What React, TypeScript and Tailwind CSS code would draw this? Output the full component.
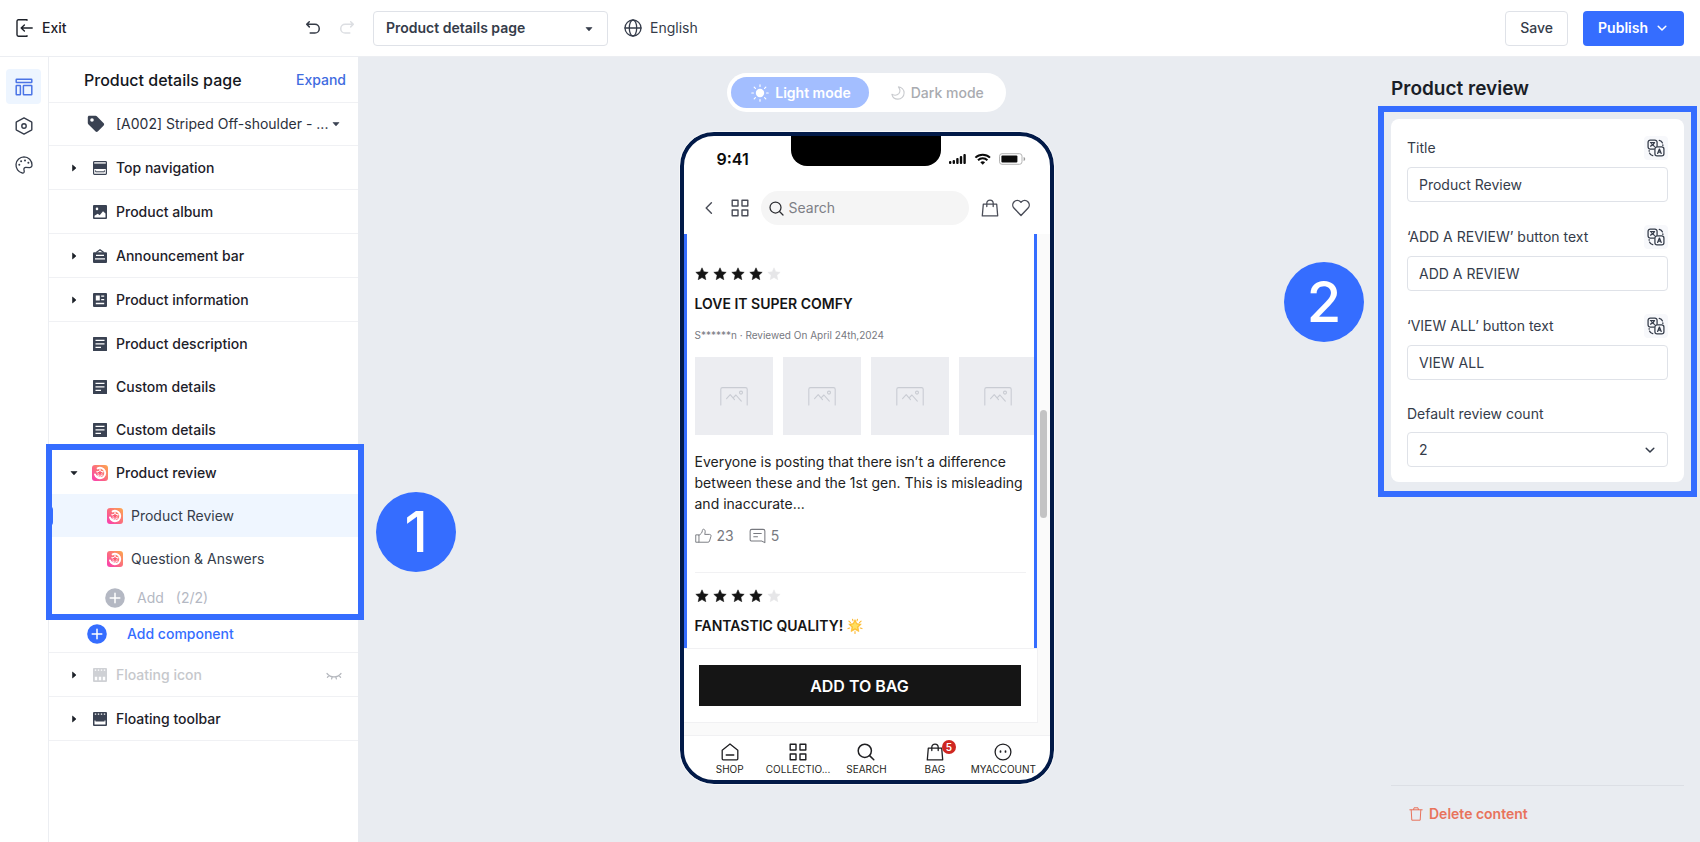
import type { ReactNode } from "react";

type IconProps = { className?: string };

const stroke = {
  fill: "none",
  stroke: "currentColor",
  strokeLinecap: "round" as const,
  strokeLinejoin: "round" as const,
};

function Caret({ className = "" }: IconProps) {
  return (
    <svg className={`h-2 w-2 ${className}`} viewBox="0 0 8 8" aria-hidden="true">
      <path d="M1 2.5h6L4.4 5.6a.6.6 0 0 1-.8 0z" fill="currentColor" stroke="currentColor" strokeWidth=".6" strokeLinejoin="round" />
    </svg>
  );
}

function ChevronDown({ className = "" }: IconProps) {
  return (
    <svg className={`h-3 w-3 ${className}`} viewBox="0 0 12 12" {...stroke} strokeWidth="1.5" aria-hidden="true">
      <path d="M2.2 4.2 6 8l3.8-3.8" />
    </svg>
  );
}

function BackIcon() {
  return (
    <svg className="h-3 w-3" viewBox="0 0 12 12" {...stroke} strokeWidth="1.4" aria-hidden="true">
      <path d="M8.400.8 3.200 6l5.200 5.200" />
    </svg>
  );
}

function ExitIcon() {
  return (
    <svg className="h-[18px] w-[18px]" viewBox="0 0 18 18" {...stroke} strokeWidth="1.4" aria-hidden="true">
      <path d="M11 1.200V.8H2.400C1.600.8 1 1.400 1 2.200v13.600c0 .8.600 1.400 1.400 1.400H11v-.4M16.200 9H5.200M8.400 6 5.200 9l3.200 3" />
    </svg>
  );
}

function UndoIcon({ className = "" }: IconProps) {
  return (
    <svg className={`h-4 w-4 ${className}`} viewBox="0 0 16 16" {...stroke} strokeWidth="1.5" aria-hidden="true">
      <path d="M4.300 1.800 1.700 4.300l2.600 2.600M1.900 4.300h8a4.200 4.200 0 0 1 0 8.700H5.200" />
    </svg>
  );
}

function GlobeIcon() {
  return (
    <svg className="h-[18px] w-[18px]" viewBox="0 0 18 18" {...stroke} strokeWidth="1.3" aria-hidden="true">
      <circle cx="9" cy="9" r="8" />
      <ellipse cx="9" cy="9" rx="3.7" ry="8" />
      <path d="M1 9h16" />
    </svg>
  );
}

function LayoutIcon() {
  return (
    <svg className="h-[18px] w-[18px]" viewBox="0 0 18 18" {...stroke} strokeWidth="1.5" aria-hidden="true">
      <rect x="1.2" y="1.2" width="15.6" height="3.4" rx=".5" />
      <rect x="1.2" y="7.6" width="4.2" height="9.2" rx=".5" />
      <rect x="8.4" y="7.6" width="8.4" height="9.2" rx=".5" />
    </svg>
  );
}

function HexIcon() {
  return (
    <svg className="h-[18px] w-[18px]" viewBox="0 0 18 18" {...stroke} strokeWidth="1.4" aria-hidden="true">
      <path d="M9 .9 16.400 4.800c.3.200.4.400.4.700v7c0 .3-.1.500-.4.700L9 17.100l-7.400-3.900c-.3-.2-.4-.4-.4-.7v-7c0-.3.1-.5.4-.7z" />
      <circle cx="9" cy="9" r="2.2" />
    </svg>
  );
}

function PaletteIcon() {
  return (
    <svg className="h-[18px] w-[18px]" viewBox="0 0 18 18" {...stroke} strokeWidth="1.3" aria-hidden="true">
      <path d="M9 .8a8.200 8.200 0 0 0-1.600 16.200c1.300.2 2-.6 1.800-1.800l-.3-1.700c-.2-1.300.7-2.200 2-2.100l3.400.3c1.400.1 2.700-.9 2.700-2.700C17 4.500 13.500.8 9 .8z" />
      <g fill="currentColor" stroke="none">
        <circle cx="4.3" cy="8.8" r="1" />
        <circle cx="6.1" cy="5.2" r="1" />
        <circle cx="10" cy="4.4" r="1" />
        <circle cx="13.4" cy="6.8" r="1" />
      </g>
    </svg>
  );
}

function TagIcon() {
  return (
    <svg className="h-[18px] w-[18px] shrink-0" viewBox="0 0 18 18" aria-hidden="true">
      <path
        fillRule="evenodd"
        fill="currentColor"
        d="M2.200.8h6.500c.4 0 .8.2 1.100.5l6.900 7c.6.600.6 1.500 0 2.100l-6 6.200c-.6.600-1.500.6-2.100 0L1.300 9.200c-.3-.3-.5-.7-.5-1.100V2.300C.8 1.500 1.400.8 2.200.8zM5 3.200a1.800 1.800 0 1 0 0 3.600 1.800 1.800 0 0 0 0-3.600z"
      />
    </svg>
  );
}

function Glyph({ children }: { children: ReactNode }) {
  return (
    <svg className="h-[14px] w-[14px]" viewBox="0 0 14 14" fill="currentColor" aria-hidden="true">
      {children}
    </svg>
  );
}

const topNavGlyph = (
  <Glyph>
    <rect x=".6" y=".6" width="12.8" height="12.8" rx=".8" fill="none" stroke="currentColor" strokeWidth="1.2" />
    <path d="M1 2.600h12V8H1z" />
    <path d="M2.600 9.400v1.400h8.800V9.400" fill="none" stroke="currentColor" strokeWidth="1" />
  </Glyph>
);

const albumGlyph = (
  <Glyph>
    <path fillRule="evenodd" d="M1 0h12a1 1 0 0 1 1 1v12a1 1 0 0 1-1 1H1a1 1 0 0 1-1-1V1a1 1 0 0 1 1-1zm3 2.600a1.300 1.300 0 1 0 0 2.600 1.300 1.300 0 0 0 0-2.600zM1.500 12.500h11V8.600L10 6.200l-3.300 4.100-2-1.600-3.200 2z" />
  </Glyph>
);

const announceGlyph = (
  <Glyph>
    <path d="M3.200 3.600 7 .8l3.800 2.800" fill="none" stroke="currentColor" strokeWidth="1.3" />
    <path fillRule="evenodd" d="M1 3.200h12a1 1 0 0 1 1 1V13a1 1 0 0 1-1 1H1a1 1 0 0 1-1-1V4.200a1 1 0 0 1 1-1zm2 2.500v1.300h8V5.700zm-1 3.500v1.300h10V9.200z" />
  </Glyph>
);

const infoGlyph = (
  <Glyph>
    <path fillRule="evenodd" d="M1 0h12a1 1 0 0 1 1 1v12a1 1 0 0 1-1 1H1a1 1 0 0 1-1-1V1a1 1 0 0 1 1-1zm1.800 2.500v5h4v-5zm5.400 0v1.300h3V2.500zm0 3.400v1.300h3V5.900zM2.800 9.800v1.400h8.400V9.800z" />
  </Glyph>
);

const textGlyph = (
  <Glyph>
    <path fillRule="evenodd" d="M.6 0h12.800c.3 0 .6.3.6.600v12.800c0 .3-.3.600-.6.600H.6a.6.6 0 0 1-.6-.6V.6C0 .3.3 0 .6 0zM2.500 2.800v1.300h9V2.800zm0 3.500v1.300h9V6.300zm0 3.500v1.300h5.500V9.800z" />
  </Glyph>
);

const toolbarGlyph = (
  <Glyph>
    <path fillRule="evenodd" d="M1 0h12a1 1 0 0 1 1 1v12a1 1 0 0 1-1 1H1a1 1 0 0 1-1-1V1a1 1 0 0 1 1-1zm.8 1.500v1.200h1.400V1.500zm3 0v1.200h1.400V1.500zm3 0v1.200h1.400V1.500zm3 0v1.200h1.400V1.500zM1.500 8.600v3.900h11V8.600h-1v1h-9v-1z" />
  </Glyph>
);

const floatingGlyph = (
  <Glyph>
    <path fillRule="evenodd" d="M1 0h12a1 1 0 0 1 1 1v12a1 1 0 0 1-1 1H1a1 1 0 0 1-1-1V1a1 1 0 0 1 1-1zm.8 1.500v1.200h1.400V1.500zm3 0v1.200h1.400V1.500zm3 0v1.200h1.400V1.500zm3 0v1.200h1.400V1.500zM1.800 8.800v3.400h2.400V8.800zm4 0v3.400h2.400V8.800zm4 0v3.400h2.400V8.800z" />
  </Glyph>
);

function ReviewAppIcon() {
  return (
    <svg className="h-4 w-4" viewBox="0 0 16 16" aria-hidden="true">
      <defs>
        <linearGradient id="reviewApp" x1="0" y1="1" x2="1" y2="0">
          <stop offset="0" stopColor="#f93bb4" />
          <stop offset=".5" stopColor="#fb6f7c" />
          <stop offset="1" stopColor="#fda94c" />
        </linearGradient>
      </defs>
      <rect width="16" height="16" rx="3" fill="url(#reviewApp)" />
      <path d="M5.600 3.400A5.200 5.200 0 1 1 3 9.400" fill="none" stroke="#fff" strokeWidth="1.900" strokeLinecap="round" />
      <path d="M2.600 8.600c1.600 2.600 4.200 3.200 6.600 2.700l.6 1.900C6.400 14.600 2.800 12.400 2.600 8.600z" fill="#fff" />
      <path d="m8 4.400 1 2.200 2.400.2-1.800 1.600.5 2.400L8 9.600l-2.100 1.200.5-2.400-1.800-1.600L7 6.600z" fill="#fff" stroke="#fff" strokeWidth="1" />
      <path d="m8 5 .9 1.900 2.100.2-1.600 1.400.4 2L8 9.500l-1.800 1 .4-2L5 7.100l2.100-.2z" fill="#fb5c74" />
    </svg>
  );
}

function PlusCircle() {
  return (
    <svg className="h-5 w-5" viewBox="0 0 20 20" aria-hidden="true">
      <circle cx="10" cy="10" r="9.8" fill="currentColor" />
      <path d="M10 5.200v9.600M5.200 10h9.600" stroke="#fff" strokeWidth="1.5" strokeLinecap="round" />
    </svg>
  );
}

function ClosedEye() {
  return (
    <svg className="h-4 w-4 text-[#b4b7bd]" viewBox="0 0 16 16" {...stroke} strokeWidth="1.2" aria-hidden="true">
      <path d="M1 6.500c1.800 2.200 4.200 3.400 7 3.400s5.200-1.200 7-3.400M3 8.500 1.400 10.400M6.200 9.800l-.6 2.200M9.800 9.800l.6 2.200M13 8.500l1.600 1.900" />
    </svg>
  );
}

function SunIcon() {
  return (
    <svg className="h-[18px] w-[18px]" viewBox="0 0 18 18" fill="currentColor" aria-hidden="true">
      <circle cx="9" cy="9" r="4.2" />
      <path
        d="M9 .8v1.600M9 15.600v1.600M.8 9h1.600M15.600 9h1.600M3.200 3.200l1.200 1.200M13.600 13.600l1.200 1.200M3.200 14.800l1.200-1.200M13.600 4.400l1.200-1.200"
        stroke="currentColor"
        strokeWidth="1.2"
        strokeLinecap="round"
      />
    </svg>
  );
}

function MoonIcon() {
  return (
    <svg className="h-[14px] w-[14px] text-[#c9cbcf]" viewBox="0 0 14 14" {...stroke} strokeWidth="1.1" aria-hidden="true">
      <path d="M7.400.9c2 2.700 1.900 5 .4 6.700-1.700 1.800-4.300 2-6.900.7.6 2.800 3 4.800 6 4.800 3.400 0 6.200-2.700 6.200-6.100 0-3-2.300-5.700-5.700-6.100z" />
    </svg>
  );
}

function GridIcon() {
  return (
    <svg className="h-[18px] w-[18px]" viewBox="0 0 18 18" {...stroke} strokeWidth="1.4" aria-hidden="true">
      <rect x="1.2" y="1.2" width="5.8" height="5.8" />
      <rect x="11" y="1.2" width="5.8" height="5.8" />
      <rect x="1.2" y="11" width="5.8" height="5.8" />
      <rect x="11" y="11" width="5.8" height="5.8" />
    </svg>
  );
}

function SearchIcon({ className = "" }: IconProps) {
  return (
    <svg className={className} viewBox="0 0 18 18" {...stroke} strokeWidth="1.5" aria-hidden="true">
      <circle cx="7.8" cy="7.8" r="6.6" />
      <path d="m12.600 12.600 4.200 4.200" />
    </svg>
  );
}

function BagIcon() {
  return (
    <svg className="h-[18px] w-[18px]" viewBox="0 0 18 18" {...stroke} strokeWidth="1.3" aria-hidden="true">
      <path d="M2.300 5.200h13.400l1 11.700H1.300zM5.800 7.600V4.300a3.200 3.200 0 0 1 6.400 0v3.300" />
    </svg>
  );
}

function HeartIcon() {
  return (
    <svg className="h-[18px] w-[18px]" viewBox="0 0 18 18" {...stroke} strokeWidth="1.4" aria-hidden="true">
      <path d="M9 16.400 2.100 9.200a4.600 4.600 0 0 1 0-6.500 4.500 4.500 0 0 1 6.400 0L9 3.300l.5-.6a4.500 4.500 0 0 1 6.400 0 4.600 4.600 0 0 1 0 6.500z" />
    </svg>
  );
}

function StarIcon({ filled }: { filled: boolean }) {
  return (
    <svg className={`h-[14px] w-[14px] ${filled ? "text-[#151515]" : "text-[#e6e6e8]"}`} viewBox="0 0 14 14" aria-hidden="true">
      <path
        d="m7 .8 1.800 4 4.400.5-3.300 3 .9 4.400L7 10.500l-3.800 2.200.9-4.400-3.300-3 4.400-.5z"
        fill="currentColor"
        stroke="currentColor"
        strokeWidth=".5"
        strokeLinejoin="round"
      />
    </svg>
  );
}

function GlowStar() {
  return (
    <svg className="h-4 w-4" viewBox="0 0 16 16" role="img" aria-label="glowing star">
      <g stroke="#fbb934" strokeWidth="1.100" strokeLinecap="round">
        <path d="M5.500 1.200 6 2.800M10.500 1.200 10 2.800M1.900 3.200l1.600 1.400M14.100 3.200l-1.600 1.400M1 10.600l1.800-.6M15 10.600l-1.800-.6M8 13.600v2" />
      </g>
      <path d="M8 1.600 9.900 5.600l4.400.6-3.200 3 .8 4.400L8 11.500l-3.900 2.100.8-4.400-3.200-3 4.400-.6z" fill="#fdbb2a" stroke="#fdbb2a" strokeWidth=".6" strokeLinejoin="round" />
      <path d="M8 3.400 9.300 6.300l3.100.4-2.300 2.100.6 3L8 10.200l-2.700 1.600.6-3-2.300-2.100 3.100-.4z" fill="#fedf62" />
    </svg>
  );
}

function PictureIcon() {
  return (
    <svg className="h-5 w-7" viewBox="0 0 28 20" {...stroke} strokeWidth="1.1" aria-hidden="true">
      <path d="M.8 19V3.300c0-1 .6-1.700 1.700-1.700h23c1.100 0 1.700.7 1.700 1.700V19" />
      <path d="m6.600 12.600 3.600-3.900 4.300 5M13.600 11.400l2.300-2.400 5.400 6.200" />
      <circle cx="21" cy="6.6" r="1.5" />
    </svg>
  );
}

function ThumbIcon() {
  return (
    <svg className="h-4 w-[17px]" viewBox="0 0 18 16" {...stroke} strokeWidth="1" aria-hidden="true">
      <path d="M1.200 6.800h3v7.800h-3zM4.200 7.200c2-.9 3.400-2.700 3.600-5 .1-1.100.7-1.500 1.500-1.300 1.500.4 1.700 2.200 1.300 4l-.3 1.400h5c1.300 0 1.900.9 1.600 2l-1.500 5c-.3.9-.8 1.300-1.700 1.300H4.200" />
    </svg>
  );
}

function CommentIcon() {
  return (
    <svg className="h-4 w-[17px]" viewBox="0 0 18 16" {...stroke} strokeWidth="1.1" aria-hidden="true">
      <path d="M16.800 15 13.600 13.400H3c-1.100 0-1.800-.7-1.800-1.800V2.800C1.200 1.700 1.900 1 3 1h12c1.100 0 1.800.7 1.800 1.800zM5 5.400h8M5 8.800h4" />
    </svg>
  );
}

function StatusIcons() {
  return (
    <svg className="h-3 w-[78px]" viewBox="0 0 78 12" fill="#0b0b0b" aria-label="Signal, wifi and battery" role="img">
      <rect x="0" y="8" width="2.4" height="3" rx="1" />
      <rect x="3.6" y="7" width="2.4" height="4" rx="1" />
      <rect x="7.2" y="5" width="2.4" height="6" rx="1" />
      <rect x="10.8" y="3" width="2.4" height="8" rx="1" />
      <rect x="14.4" y="1" width="2.4" height="10" rx="1" />
      <g fill="none" stroke="#0b0b0b" strokeWidth="2">
        <path d="M26.400 4.600a10.500 10.500 0 0 1 14.600 0" />
        <path d="M29 7.300a6.700 6.700 0 0 1 9.400 0" />
      </g>
      <path d="M31.300 9.300a3.800 3.800 0 0 1 4.800 0l-2.400 2.500z" />
      <rect x="50.5" y=".7" width="22.5" height="10.6" rx="2.5" fill="none" stroke="#b3b3b3" />
      <rect x="52.4" y="2.4" width="16" height="7.2" rx="1" />
      <path d="M74.600 4v4c1-.4 1.600-1.100 1.600-2s-.6-1.600-1.600-2z" fill="#9c9c9c" />
    </svg>
  );
}

function TranslateIcon() {
  return (
    <svg className="h-[18px] w-[18px]" viewBox="0 0 20 20" {...stroke} strokeWidth="1.4" aria-hidden="true">
      <path d="M8 11.200H3.600A2.400 2.400 0 0 1 1.200 8.800V3.600a2.400 2.400 0 0 1 2.400-2.400h5.200a2.400 2.400 0 0 1 2.400 2.400V8" />
      <rect x="8.8" y="8.8" width="10" height="10" rx="2.4" />
      <path d="M3.800 4h4.600M8.200 4.200c-.6 1.700-2 3-4.200 3.800M5 5.400l3.200 2.800" />
      <path d="m11.800 16 2-4.800 2 4.800M12.500 14.600h2.600" />
      <path d="M13.600 1.600c1.800.2 3 1.200 3.600 2.800M17.600 6.400v.8M6.400 18.400c-1.800-.2-3-1.200-3.600-2.800M2.400 13.600v-.8" />
    </svg>
  );
}

function HomeIcon() {
  return (
    <svg className="h-[18px] w-[18px]" viewBox="0 0 18 18" {...stroke} strokeWidth="1.3" aria-hidden="true">
      <path d="M1.200 7.200 9 1l7.800 6.200v8.600a1 1 0 0 1-1 1H2.200a1 1 0 0 1-1-1zM5.200 12h7.600" />
    </svg>
  );
}

function FaceIcon() {
  return (
    <svg className="h-[18px] w-[18px]" viewBox="0 0 18 18" {...stroke} strokeWidth="1.3" aria-hidden="true">
      <circle cx="9" cy="9" r="7.9" />
      <path d="M6.500 8v1M11.500 8v1" strokeWidth="1.7" />
    </svg>
  );
}

function TrashIcon() {
  return (
    <svg className="h-[14px] w-[14px]" viewBox="0 0 14 14" {...stroke} strokeWidth="1" aria-hidden="true">
      <path d="M.8 2.800h12.400M4.600 2.600 5 .8h4l.4 1.800M2.200 3l.6 10.200h8.400L11.800 3" />
    </svg>
  );
}

function Header() {
  return (
    <header className="flex h-[57px] shrink-0 items-center border-b border-[#eceef2] bg-white px-4">
      <div className="flex w-[357px] items-center justify-between pr-[18px]">
        <button className="flex items-center gap-2 text-sm font-medium text-[#1d2129]">
          <ExitIcon />
          Exit
        </button>
        <div className="flex gap-[18px] text-[#343a46]">
          <button aria-label="Undo">
            <UndoIcon />
          </button>
          <button aria-label="Redo" disabled>
            <UndoIcon className="-scale-x-100 text-[#dcdee2]" />
          </button>
        </div>
      </div>
      <div className="relative">
        <select
          aria-label="Page"
          className="h-[35px] w-[235px] appearance-none rounded border border-[#dfe2e8] bg-white pl-3 text-sm font-semibold text-[#353c4a]"
        >
          <option>Product details page</option>
        </select>
        <Caret className="pointer-events-none absolute top-[14px] right-[15px] text-[#353c4a]" />
      </div>
      <button className="ml-4 flex items-center gap-2 pb-px text-sm text-[#353c4a]">
        <GlobeIcon />
        English
      </button>
      <div className="ml-auto flex gap-[15px]">
        <button className="h-[35px] rounded border border-[#dfe2e8] bg-white px-[14px] text-sm font-medium text-[#353c4a]">
          Save
        </button>
        <button className="flex h-[35px] items-center gap-2 rounded bg-[#356dff] pr-4 pl-[15px] text-sm font-semibold text-white">
          Publish
          <ChevronDown />
        </button>
      </div>
    </header>
  );
}

function Rail() {
  return (
    <nav aria-label="Editor" className="flex w-12 shrink-0 flex-col gap-1 bg-white pt-3 pl-[6px] text-[#353c4a]">
      <button aria-label="Layout" className="flex h-[35px] w-[35px] items-center justify-center rounded bg-[#edf5ff] text-[#4b74e6]">
        <LayoutIcon />
      </button>
      <button aria-label="Settings" className="flex h-[35px] w-[35px] items-center justify-center">
        <HexIcon />
      </button>
      <button aria-label="Theme" className="flex h-[35px] w-[35px] items-center justify-center">
        <PaletteIcon />
      </button>
    </nav>
  );
}

type RowProps = { label: string; icon: ReactNode; arrow?: "right" | "down"; muted?: boolean };

function Row({ label, icon, arrow, muted }: RowProps) {
  return (
    <button className="flex h-full w-full items-center pr-4 pl-[21px] text-left text-sm font-medium text-[#1d2129]">
      <span className="w-[22px]">
        {arrow === "right" && <Caret className="-rotate-90" />}
        {arrow === "down" && <Caret />}
      </span>
      <span className={`flex w-4 justify-center ${muted ? "text-[#cfd1d5]" : "text-[#3a4252]"}`}>{icon}</span>
      <span className={`ml-2 ${muted ? "text-[#c6c8cc]" : ""}`}>{label}</span>
      {muted && (
        <span className="ml-auto">
          <ClosedEye />
        </span>
      )}
    </button>
  );
}

const sections: RowProps[] = [
  { label: "Top navigation", icon: topNavGlyph, arrow: "right" },
  { label: "Product album", icon: albumGlyph },
  { label: "Announcement bar", icon: announceGlyph, arrow: "right" },
  { label: "Product information", icon: infoGlyph, arrow: "right" },
];

const details = ["Product description", "Custom details", "Custom details"];

function Sidebar() {
  return (
    <aside className="w-[310px] shrink-0 border-l border-[#eceef2] bg-white">
      <div className="flex h-[46px] items-center justify-between border-b border-[#f0f1f4] pr-3 pl-[35px]">
        <h1 className="text-base font-medium text-[#14171d]">Product details page</h1>
        <button className="text-sm font-medium text-[#3f6be0]">Expand</button>
      </div>

      <div className="relative flex h-[43px] items-center border-b border-[#f0f1f4] pl-[38px] text-[#3a4252]">
        <TagIcon />
        <select aria-label="Product" className="ml-[11px] h-full w-full appearance-none bg-transparent text-sm text-[#2b303b]">
          <option>[A002] Striped Off-shoulder - ...</option>
        </select>
        <Caret className="pointer-events-none absolute top-[17px] right-[18px]" />
      </div>

      <ul>
        {sections.map((section) => (
          <li key={section.label} className="h-11 border-b border-[#f0f1f4]">
            <Row {...section} />
          </li>
        ))}
        {details.map((label, i) => (
          <li key={i} className="h-[43px]">
            <Row label={label} icon={textGlyph} />
          </li>
        ))}
        <li className="relative">
          <div className="h-[43px]">
            <Row label="Product review" icon={<ReviewAppIcon />} arrow="down" />
          </div>
          <button className="relative flex h-[43px] w-full items-center gap-2 bg-[#eff6ff] pl-[58px] text-sm text-[#353c4a]">
            <span className="absolute left-0 h-5 w-1 rounded-r bg-[#356dff]" />
            <ReviewAppIcon />
            Product Review
          </button>
          <button className="flex h-[43px] w-full items-center gap-2 pl-[58px] text-sm text-[#353c4a]">
            <ReviewAppIcon />
            Question &amp; Answers
          </button>
          <button disabled className="flex h-9 w-full items-center gap-3 pl-[56px] text-sm text-[#b4b8c3]">
            <PlusCircle />
            <span>Add</span>
            <span>(2/2)</span>
          </button>
          <div className="pointer-events-none absolute -top-[7px] -right-[6px] -bottom-1 -left-[3px] border-6 border-[#356dff]" />
          <Marker className="top-[41px] -right-[98px]">1</Marker>
        </li>
        <li className="h-[37px] border-b border-[#f0f1f4]">
          <button className="flex h-full items-center gap-5 pl-[38px] text-sm font-medium text-[#356dff]">
            <PlusCircle />
            Add component
          </button>
        </li>
        <li className="h-11 border-b border-[#f0f1f4]">
          <Row label="Floating icon" icon={floatingGlyph} arrow="right" muted />
        </li>
        <li className="h-11 border-b border-[#f0f1f4]">
          <Row label="Floating toolbar" icon={toolbarGlyph} arrow="right" />
        </li>
      </ul>
    </aside>
  );
}

function Marker({ className, children }: { className: string; children: ReactNode }) {
  return (
    <span
      className={`absolute z-10 flex h-20 w-20 items-center justify-center rounded-full bg-[#356dff] text-[56px] leading-none font-medium text-white ${className}`}
    >
      {children}
    </span>
  );
}

function Stars() {
  return (
    <div className="flex gap-1" role="img" aria-label="4 out of 5 stars">
      {[1, 2, 3, 4, 5].map((n) => (
        <StarIcon key={n} filled={n < 5} />
      ))}
    </div>
  );
}

const tabs = [
  { label: "SHOP", icon: <HomeIcon /> },
  { label: "COLLECTIO...", icon: <GridIcon /> },
  { label: "SEARCH", icon: <SearchIcon className="h-[18px] w-[18px]" /> },
  { label: "BAG", icon: <BagIcon />, badge: 5 },
  { label: "MYACCOUNT", icon: <FaceIcon /> },
];

function Phone() {
  return (
    <div className="w-[374px] shrink-0 overflow-hidden rounded-[34px] border-4 border-[#021a48] bg-white outline outline-white/60">
      <div className="flex h-[46px] justify-between pr-[23px] pl-[33px]">
        <span className="w-[67px] self-center text-base font-semibold text-[#0b0b0b]">9:41</span>
        <div className="h-[30px] w-[150px] rounded-b-[16px] bg-black" />
        <div className="self-center">
          <StatusIcons />
        </div>
      </div>

      <div className="flex h-[52px] items-center pr-5 pl-[19px] text-[#4a4d58]">
        <button aria-label="Back" className="mr-4">
          <BackIcon />
        </button>
        <button aria-label="Categories">
          <GridIcon />
        </button>
        <label className="mx-3 flex h-[34px] flex-1 items-center gap-[5px] rounded-full bg-[#f5f5f5] pl-2">
          <SearchIcon className="h-[15px] w-[15px] shrink-0 text-[#2c2d31]" />
          <input aria-label="Search" placeholder="Search" className="w-full min-w-0 bg-transparent text-sm outline-none placeholder:text-[#7d7f86]" />
        </label>
        <button aria-label="Bag" className="mr-[13px]">
          <BagIcon />
        </button>
        <button aria-label="Wishlist">
          <HeartIcon />
        </button>
      </div>

      <div className="relative h-[414px] overflow-hidden bg-[#fafafa] pr-[13px]">
        <div className="h-full overflow-hidden border-x-3 border-[#356dff] bg-white pl-2">
          <article className="pt-[33px]">
            <Stars />
            <h2 className="mt-[13px] text-sm leading-5 font-semibold text-[#151515]">LOVE IT SUPER COMFY</h2>
            <p className="mt-[13px] text-[10px] leading-4 text-[#77797f]">S******n · Reviewed On April 24th,2024</p>
            <div className="mt-[14px] flex gap-[10px]">
              {[1, 2, 3, 4].map((n) => (
                <div key={n} className="flex h-[78px] w-[78px] shrink-0 items-center justify-center bg-[#ecedf1] text-[#c9ccd3]">
                  <PictureIcon />
                </div>
              ))}
            </div>
            <p className="mt-4 text-sm leading-[21px] text-[#222222]">
              Everyone is posting that there isn’t a difference
              <br />
              between these and the 1st gen. This is misleading
              <br />
              and inaccurate...
            </p>
            <div className="mt-3 mr-2 flex items-center border-b border-[#f1f1f3] pb-[26px] text-sm text-[#77797f]">
              <button className="flex items-center gap-[5px]">
                <ThumbIcon />
                23
              </button>
              <button className="ml-[15px] flex items-center gap-[5px]">
                <CommentIcon />5
              </button>
            </div>
          </article>
          <article className="pt-4">
            <Stars />
            <h2 className="mt-[13px] flex items-center gap-1 text-sm leading-5 font-semibold text-[#151515]">
              FANTASTIC QUALITY!
              <GlowStar />
            </h2>
          </article>
        </div>
        <div className="absolute top-44 right-[3px] h-[108px] w-[7px] rounded-full bg-[#c3c3c4]" />
      </div>

      <div className="bg-[#fafafa] pr-3 pb-3">
        <div className="border-t border-r border-b border-[#f1f1f3] bg-white p-4 pl-[15px]">
          <button className="h-[41px] w-full bg-[#151515] text-base font-semibold text-white">ADD TO BAG</button>
        </div>
      </div>

      <nav aria-label="Shop" className="grid h-[45px] grid-cols-5 border-t border-[#f1f1f3] px-3 text-[#1f1f22]">
        {tabs.map((tab) => (
          <a key={tab.label} href="#" className="flex flex-col items-center pt-[7px] text-[10px] leading-4">
            <span className="relative">
              {tab.icon}
              {tab.badge && (
                <span className="absolute -top-[3px] -right-3 flex h-[14px] w-[14px] items-center justify-center rounded-full bg-[#cf2722] text-[10px] font-semibold text-white">
                  {tab.badge}
                </span>
              )}
            </span>
            {tab.label}
          </a>
        ))}
      </nav>
    </div>
  );
}

function Canvas() {
  return (
    <main className="flex flex-1 flex-col items-center gap-5 pt-4">
      <div role="group" aria-label="Preview mode" className="flex rounded-full bg-white p-1 text-sm font-medium">
        <button aria-pressed="true" className="flex h-[31px] items-center gap-[6px] rounded-full bg-[#a3beff] pr-[18px] pl-5 font-semibold text-white">
          <SunIcon />
          Light mode
        </button>
        <button aria-pressed="false" className="flex h-[31px] items-center gap-[6px] pr-[18px] pl-[22px] text-[#a9abb0]">
          <MoonIcon />
          Dark mode
        </button>
      </div>
      <Phone />
    </main>
  );
}

const fields = [
  { id: "title", label: "Title", value: "Product Review" },
  { id: "add-review", label: "‘ADD A REVIEW’ button text", value: "ADD A REVIEW" },
  { id: "view-all", label: "‘VIEW ALL’ button text", value: "VIEW ALL" },
];

function Settings() {
  return (
    <aside className="flex w-[325px] shrink-0 flex-col px-4 pt-[18px] text-sm text-[#353c4a]">
      <h2 className="text-[19px] leading-7 font-semibold text-[#1a1e27]">Product review</h2>

      <section className="relative mt-4 rounded-lg bg-white px-4 pt-[17px] pb-[15px]">
        {fields.map((field) => (
          <div key={field.id} className="mb-[23px]">
            <div className="mb-[7px] flex h-6 items-center justify-between">
              <label htmlFor={field.id}>{field.label}</label>
              <button aria-label="Translate" className="flex h-6 w-6 items-center justify-center rounded bg-[#f7f8fb]">
                <TranslateIcon />
              </button>
            </div>
            <input id={field.id} defaultValue={field.value} className="h-[35px] w-full rounded border border-[#dfe2e8] px-[11px]" />
          </div>
        ))}
        <label htmlFor="count" className="mb-[7px] flex h-[22px] items-center">
          Default review count
        </label>
        <div className="relative">
          <select id="count" className="h-[35px] w-full appearance-none rounded border border-[#dfe2e8] px-[11px]">
            <option>2</option>
          </select>
          <ChevronDown className="pointer-events-none absolute top-3 right-3" />
        </div>
        <div className="pointer-events-none absolute -inset-x-[13px] -top-[13px] -bottom-[15px] border-6 border-[#356dff]" />
        <Marker className="top-[143px] -left-[107px]">2</Marker>
      </section>

      <div className="mt-auto border-t border-[#dcdfe5] pt-[18px] pb-[18px] pl-[18px]">
        <button className="flex items-center gap-[6px] font-semibold text-[#e8735c]">
          <TrashIcon />
          Delete content
        </button>
      </div>
    </aside>
  );
}

export default function App() {
  return (
    <div className="flex min-h-screen flex-col bg-[#e9ecf1] font-['Inter',sans-serif]">
      <Header />
      <div className="flex flex-1">
        <Rail />
        <Sidebar />
        <Canvas />
        <Settings />
      </div>
    </div>
  );
}
